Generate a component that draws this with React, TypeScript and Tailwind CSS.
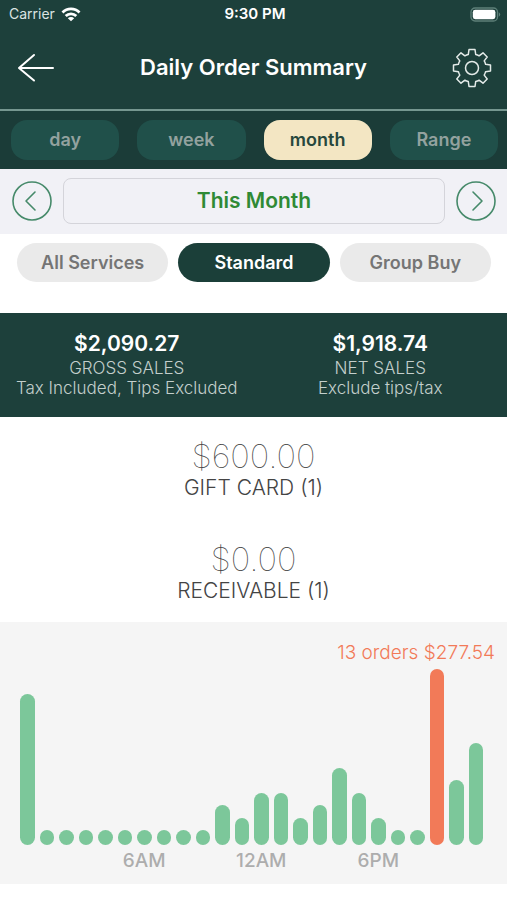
import { useState } from "react";

const ranges = ["day", "week", "month", "Range"];
const services = ["All Services", "Standard", "Group Buy"];

const totals = [
  { amount: "$2,090.27", title: "GROSS SALES", note: "Tax Included, Tips Excluded" },
  { amount: "$1,918.74", title: "NET SALES", note: "Exclude tips/tax" },
];

const payments = [
  { amount: "$600.00", label: "GIFT CARD (1)" },
  { amount: "$0.00", label: "RECEIVABLE (1)" },
];

// Orders per hour of the day
const orders = [11, 0, 0, 0, 0, 0, 0, 0, 0, 0, 2, 1, 3, 3, 1, 2, 5, 3, 1, 0, 0, 13, 4, 7];
const hourLabels: Record<number, string> = { 6: "6AM", 12: "12AM", 18: "6PM" };
const peak = Math.max(...orders);
const BASE_HEIGHT = 15;
const CHART_HEIGHT = 176;

function barHeight(count: number) {
  return Math.round(BASE_HEIGHT + (count / peak) * (CHART_HEIGHT - BASE_HEIGHT));
}

function WifiIcon() {
  return (
    <svg width="20" height="15" viewBox="0 0 20 15" aria-hidden="true" fill="none" stroke="white" strokeWidth="2.8">
      <path d="M1.500 5.500a12 12 0 0 1 17 0" />
      <path d="M4.700 9a7.500 7.500 0 0 1 10.600 0" />
      <path d="M10 14.300 6.800 11.200a4.600 4.600 0 0 1 6.400 0Z" fill="white" stroke="none" />
    </svg>
  );
}

function BatteryIcon() {
  return (
    <svg width="31" height="15" viewBox="0 0 31 15" aria-hidden="true">
      <rect x="1" y="1" width="26.5" height="13" rx="4" fill="none" stroke="#5d7f78" strokeWidth="1.3" />
      <rect x="2.8" y="2.8" width="22.6" height="9.4" rx="2.4" fill="white" />
      <path d="M28.800 5.200a2.600 2.600 0 0 1 0 4.600Z" fill="#5d7f78" />
    </svg>
  );
}

function BackIcon() {
  return (
    <svg width="38" height="30" viewBox="0 0 38 30" aria-hidden="true" fill="none" stroke="white" strokeWidth="2" strokeLinecap="round" strokeLinejoin="round">
      <path d="M36 15H2M17 2 2 15l15 12.500" />
    </svg>
  );
}

function GearIcon() {
  return (
    <svg width="40" height="40" viewBox="-20 -20 40 40" aria-hidden="true" fill="none" stroke="#e3eae8" strokeWidth="1.5" strokeLinejoin="round">
      <circle r="6.500" />
      <path d="M-3-18.500H3L3.700-13.600Q5.500-13.200 7.100-12.200L11-15.200 15.200-11 12.200-7.100Q13.200-5.500 13.600-3.700L18.500-3V3L13.600 3.700Q13.200 5.500 12.200 7.100L15.200 11 11 15.200 7.100 12.200Q5.500 13.200 3.700 13.600L3 18.500H-3L-3.700 13.600Q-5.500 13.200-7.100 12.200L-11 15.200-15.200 11-12.200 7.100Q-13.200 5.500-13.600 3.700L-18.500 3V-3L-13.600-3.700Q-13.200-5.500-12.200-7.100L-15.200-11-11-15.200-7.100-12.200Q-5.500-13.200-3.700-13.600Z" />
    </svg>
  );
}

function StepButton({ label, path }: { label: string; path: string }) {
  return (
    <button type="button" aria-label={label} className="shrink-0">
      <svg width="40" height="40" viewBox="0 0 40 40" aria-hidden="true" fill="none" stroke="#468a6a" strokeWidth="1.6" strokeLinecap="round" strokeLinejoin="round">
        <circle cx="20" cy="20" r="19" />
        <path d={path} />
      </svg>
    </button>
  );
}

export default function App() {
  const [range, setRange] = useState("month");
  const [service, setService] = useState("Standard");

  return (
    <div className="min-h-screen bg-white font-['Inter','Liberation_Sans',sans-serif]">
      <header className="bg-[#1d403b] text-white">
        <div className="grid h-7 grid-cols-3 items-center pl-[9px] pr-[6px]">
          <div className="flex items-center gap-[6px] text-sm text-[#dbe4e2]">
            Carrier
            <WifiIcon />
          </div>
          <div className="text-center text-[15px] font-semibold">9:30 PM</div>
          <div className="flex justify-end">
            <BatteryIcon />
          </div>
        </div>
        <div className="flex h-[81px] items-center justify-between pb-[2px] pl-[17px] pr-[15px]">
          <button type="button" aria-label="Back">
            <BackIcon />
          </button>
          <h1 className="text-[22px] font-semibold">Daily Order Summary</h1>
          <button type="button" aria-label="Settings">
            <GearIcon />
          </button>
        </div>
      </header>

      <nav className="grid grid-cols-4 gap-[18px] border-t-2 border-[#769790] bg-[#1b3c38] py-[9px] pl-[11px] pr-[9px]">
        {ranges.map((name) => (
          <button
            key={name}
            type="button"
            aria-pressed={name === range}
            onClick={() => setRange(name)}
            className={`h-10 rounded-2xl text-lg font-semibold ${
              name === range ? "bg-[#f3e6c3] text-[#27483d]" : "bg-[#20504a] text-[#93a29f]"
            }`}
          >
            {name}
          </button>
        ))}
      </nav>

      <section className="flex items-center gap-[11px] bg-[#f1f1f6] pb-[10px] pl-3 pr-[11px] pt-[9px]">
        <StepButton label="Previous period" path="M23 11l-9 9 9 9" />
        <button
          type="button"
          className="h-[46px] min-w-0 flex-1 rounded-lg border border-[#d4d4da] text-[21px] font-semibold text-[#2f8a35]"
        >
          This Month
        </button>
        <StepButton label="Next period" path="M17 11l9 9-9 9" />
      </section>

      <section className="grid grid-cols-3 gap-[10px] pb-[31px] pl-[17px] pr-4 pt-[9px]">
        {services.map((name) => (
          <button
            key={name}
            type="button"
            aria-pressed={name === service}
            onClick={() => setService(name)}
            className={`h-[39px] rounded-full text-lg font-semibold ${
              name === service ? "bg-[#1b3f39] text-white" : "bg-[#eaeaea] text-[#757575]"
            }`}
          >
            {name}
          </button>
        ))}
      </section>

      <section className="grid grid-cols-2 bg-[#1d403b] pb-[19px] pt-[17px] text-center">
        {totals.map((total) => (
          <div key={total.title}>
            <p className="text-[21px] font-semibold leading-7 text-white">{total.amount}</p>
            <p className="text-[17px] font-light leading-5 text-[#c3cfcc]">{total.title}</p>
            <p className="text-[17px] font-light leading-5 text-[#c3cfcc]">{total.note}</p>
          </div>
        ))}
      </section>

      <section className="flex flex-col gap-[39px] py-[19px] text-center">
        {payments.map((payment) => (
          <div key={payment.label}>
            <p className="text-[33px] font-thin leading-10 text-[#444]">{payment.amount}</p>
            <p className="text-[21px] font-light leading-6 text-[#444]">{payment.label}</p>
          </div>
        ))}
      </section>

      <section className="bg-[#f5f5f5] pt-[19px]">
        <p className="pr-3 text-right text-[19px] font-light leading-6 text-[#f27a58]">13 orders $277.54</p>
        <div className="flex items-end gap-[5px] pl-5 pr-6 pt-1">
          {orders.map((count, hour) => (
            <div key={hour} className="flex min-w-0 flex-1 flex-col items-center">
              <div
                className={`w-full rounded-full ${count === peak ? "bg-[#f27a58]" : "bg-[#7cc79a]"}`}
                style={{ height: barHeight(count) }}
              />
              <span className="h-[39px] whitespace-nowrap pt-1 text-[19px] font-medium leading-6 text-[#adadad]">
                {hourLabels[hour]}
              </span>
            </div>
          ))}
        </div>
      </section>
    </div>
  );
}
